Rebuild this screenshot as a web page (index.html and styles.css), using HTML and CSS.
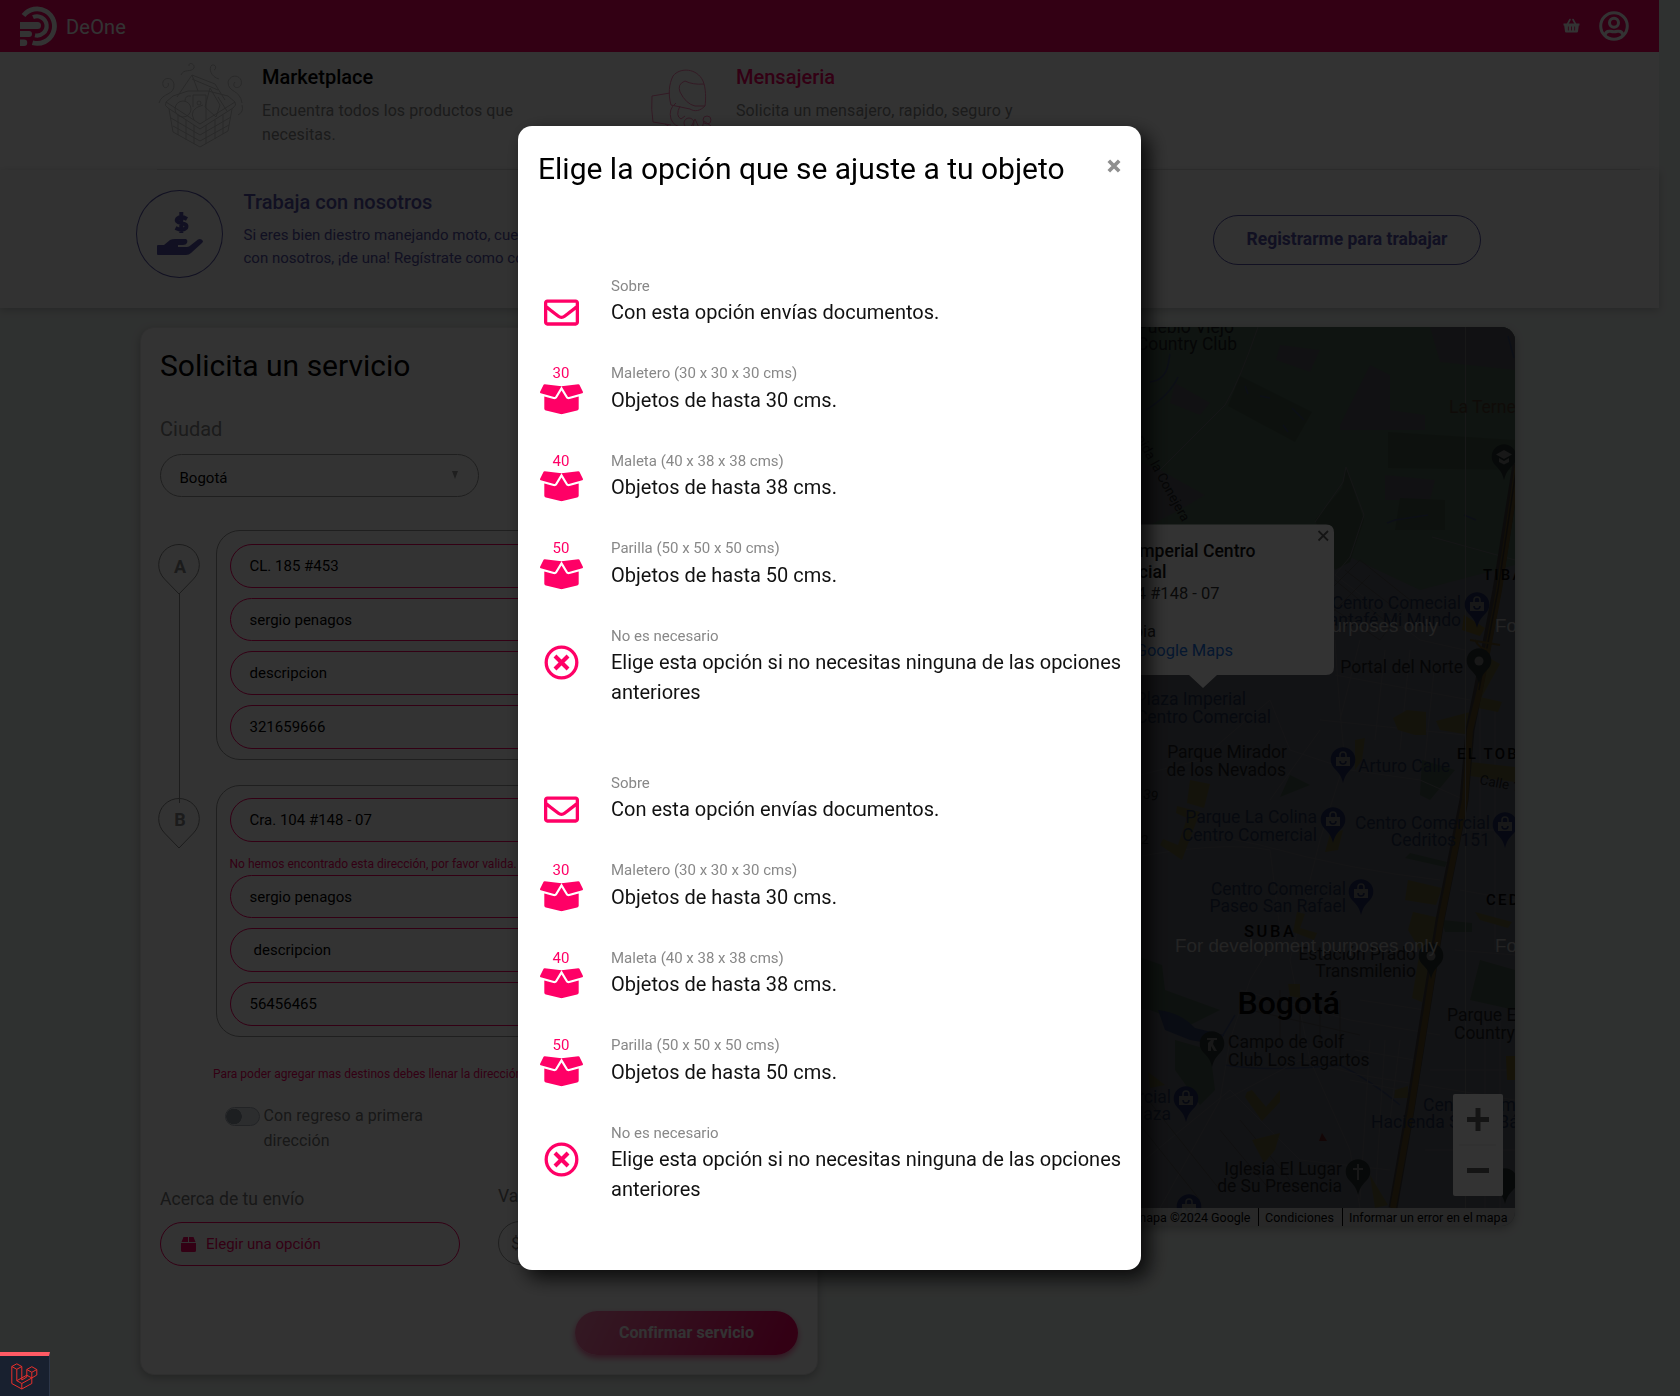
FILE: index.html
```html
<!DOCTYPE html>
<html lang="es">
<head>
<meta charset="utf-8">
<title>DeOne</title>
<link rel="stylesheet" href="styles.css">
</head>
<body>
<svg width="0" height="0" class="defs">
  <defs>
    <symbol id="envelope" viewBox="0 0 512 512"><path d="M464 64H48C21.5 64 0 85.500 0 112v288c0 26.500 21.500 48 48 48h416c26.500 0 48-21.500 48-48V112c0-26.500-21.500-48-48-48zm0 48v40.800c-22.400 18.300-58.200 46.700-134.600 106.500-16.800 13.200-50.200 45.100-73.400 44.700-23.200.4-56.600-31.500-73.400-44.700C106.200 199.500 70.400 171.100 48 152.800V112h416zM48 400V214.400c22.900 18.300 55.400 43.900 104.900 82.600 21.900 17.200 60.100 55.200 103.100 55 42.700.2 80.500-37.200 103.100-55 49.500-38.800 82-64.400 104.900-82.700V400H48z"/></symbol>
    <symbol id="box" viewBox="0 0 640 512"><path d="M425.700 256c-16.900 0-32.800-9-41.400-23.400L320 126l-64.200 106.600c-8.700 14.500-24.600 23.500-41.500 23.500-4.500 0-9-.6-13.300-1.900L64 215v178c0 14.700 10 27.500 24.200 31l216.200 54.100c10.200 2.500 20.900 2.500 31 0L551.800 424c14.200-3.600 24.200-16.400 24.200-31V215l-137 39.100c-4.300 1.300-8.800 1.900-13.300 1.900zm212.600-112.200L586.800 41c-3.100-6.200-9.800-9.800-16.700-8.900L320 64l91.700 152.100c3.800 6.300 11.400 9.300 18.500 7.300l197.900-56.500c9.900-2.900 14.700-13.900 10.200-23.100zM53.200 41L1.700 143.800c-4.600 9.200.3 20.200 10.100 23l197.900 56.500c7.100 2 14.700-1 18.500-7.300L320 64 69.800 32.100c-6.900-.8-13.500 2.700-16.600 8.900z"/></symbol>
    <symbol id="none" viewBox="0 0 512 512"><circle cx="256" cy="256" r="224" fill="none" stroke="currentColor" stroke-width="48"/><path d="M182 182L330 330M330 182L182 330" fill="none" stroke="currentColor" stroke-width="60" stroke-linecap="square"/></symbol>
    <g id="shop"><path class="shop-pin" d="M0 23C-2 15-5 12-9 8A12.300 12.300 0 1 1 9 8C5 12 2 15 0 23Z"/><path class="pin-mark" d="M-7-3H7V6H-7Z"/><path class="pin-line" d="M-3-3V-5A3 3 0 0 1 3-5V-3"/><path class="pin-smile" d="M-3 1A3 3 0 0 0 3 1"/></g>
    <g id="place"><path class="place-pin" d="M0 23C-2 15-5 12-9 8A12.300 12.300 0 1 1 9 8C5 12 2 15 0 23Z"/></g>
  </defs>
</svg>

<div class="page">
  <header class="topbar">
    <a class="brand">
      <svg width="38" height="40" viewBox="0 0 38 40" fill="none" stroke="#fff" stroke-width="4.800">
        <path d="M3.500 9.500A17.300 17.300 0 1 1 12.500 36.800"/><path stroke-width="4.200" d="M13 11.200A9.600 9.600 0 1 1 15 29.300"/>
        <path d="M0 16H17.500A3.500 3.500 0 0 1 17.500 23H0Z M0 25H9A3 3 0 0 1 9 31H0Z M0 33.500H4A3.200 3.200 0 0 1 4 40H0Z" fill="#fff" stroke="none"/>
      </svg>
      <span>DeOne</span>
    </a>
    <div class="actions">
      <svg width="17" height="15" viewBox="0 0 17 15"><path d="M4 7L7 1.500M13 7L10 1.500" fill="none" stroke="#fff" stroke-width="1.600" stroke-linecap="round"/><path fill="#fff" fill-rule="evenodd" d="M.5 5.500H16.500V7.500H15.800L15 13.500Q14.800 14.500 14 14.500H3Q2.200 14.500 2 13.500L1.200 7.500H.5ZM4.900 8.500V12.500H5.700V8.500ZM8.100 8.500V12.500H8.900V8.500ZM11.300 8.500V12.500H12.100V8.500Z"/></svg>
      <svg width="30" height="30" viewBox="0 0 30 30" fill="none" stroke="#fff" stroke-width="3"><circle cx="15" cy="15" r="13.300"/><circle cx="15" cy="11.800" r="4.500"/><path d="M6 24C7 19.500 10 20 11.500 20.300C14 21 16 21 18.500 20.300C20 20 23 19.500 24 24"/></svg>
    </div>
  </header>

  <nav class="services">
    <a class="service">
      <svg class="service-art" width="86" height="86" viewBox="0 0 86 86" fill="none" stroke="#cacaca" stroke-width="1">
        <path d="M8 40L42 62L77 40L70 34L50 29L30 29L15 34Z M8 40Q6 44 10 46L42 67L75 46Q79 43 77 40"/><path d="M11 47L15 70L42 85L70 69L74 47 M13 56L42 73L73 55 M15 64L42 79L71 63 M20 53V73 M28 58V78 M36 63V82 M48 63V82 M57 58V77 M65 53V72"/>
        <path d="M19 35L34 13L57 22L67 38 M34 13L40 29 M34 17L60 28 M35 33H48V58 M35 33V45 M41 39A2 2 0 1 0 41 43A2 2 0 1 0 41 39 M52 26L47 45L58 55L62 43Z M60 35L69 49 M36 58Q30 47 45 43"/><circle cx="25" cy="47" r="8"/><path d="M27 39Q27 33 33 34"/>
        <path d="M1 41C4 30 17 34 16 22C14 13 3 16 5 23C6 28 12 25 10 21 M84 41C82 27 70 31 70 20C73 10 86 14 83 23C80 28 73 25 77 20 M23 13C26 6 33 11 36 6C37 1 30 0 31 4 M61 17C53 15 50 6 54 3C58 2 59 7 56 8 M84 43Q86 50 80 53"/>
      </svg>
      <div><h2>Marketplace</h2><p>Encuentra todos los productos que necesitas.</p></div>
    </a>
    <a class="service service-active">
      <svg class="service-art" width="86" height="86" viewBox="0 0 86 86" fill="none" stroke="#ff0066" stroke-width="1" opacity=".5">
        <path d="M28 41C25 30 26 20 30 12C37 3 54 4 60 17C63 24 63 35 62 42C57 47 52 48 47 45Z"/><path d="M61 20Q50 21 42 17Q34 20 37 28Q43 40 52 42H62"/><path d="M27 29L9 32Q8 46 10 58L28 61 M33 39Q25 45 28 55Q31 63 40 63 M37 42Q32 52 38 55L42 52"/><circle cx="46" cy="59" r="5"/><circle cx="64" cy="56" r="4"/><path d="M22 60Q34 69 47 65L52 55L58 68L61 57L68 62V70H50"/>
      </svg>
      <div><h2>Mensajeria</h2><p>Solicita un mensajero, rapido, seguro y confiable.</p></div>
    </a>
  </nav>

  <section class="jobs">
    <div class="jobs-icon">
      <svg width="46" height="44" viewBox="0 0 46 44" fill="#5653a8"><path d="M1 33H7L13 28Q15 27 18 27H29Q31 28 30 31Q29 33 26 33H21V35H30Q32 35 34 33L41 27.500Q44 26 46 29Q46 30 45 31L34 41Q32 43 29 43H1Q0 43 0 42V34Q0 33 1 33Z"/><path d="M30 7Q24 3.500 20.500 6.500Q18 10 24 11Q31 12 29 16Q26 19.500 18.500 16M24.300 0V21" fill="none" stroke="#5653a8" stroke-width="4"/></svg>
    </div>
    <div class="jobs-text">
      <h2>Trabaja con nosotros</h2>
      <p>Si eres bien diestro manejando moto, cuentas con licencia y quieres trabajar<br>con nosotros, ¡de una! Regístrate como conductor.</p>
    </div>
    <a class="jobs-button">Registrarme para trabajar</a>
  </section>

  <main class="content">
    <form class="card">
      <h1>Solicita un servicio</h1>
      <label class="city-label">Ciudad</label>
      <div class="select"><span>Bogotá</span><svg width="6" height="8" viewBox="0 0 6 8"><path d="M0 0H6L3 8Z" fill="#999"/></svg></div>
      <div class="route">
        <svg class="stops" width="42" height="320" viewBox="0 0 42 320" fill="none" stroke="#8a8a8a" stroke-width="1">
          <path d="M21 64L6.500 49A20.300 20.300 0 1 1 35.500 49ZM21 318L6.500 303A20.300 20.300 0 1 1 35.500 303Z"/><path d="M21.500 64V273"/>
          <text x="22" y="42.500" text-anchor="middle">A</text><text x="22" y="296" text-anchor="middle">B</text>
        </svg>
        <div class="groups">
          <div class="group">
            <div class="field">CL. 185 #453</div><div class="field">sergio penagos</div><div class="field">descripcion</div><div class="field">321659666</div>
          </div>
          <div class="group group-b">
            <div class="field">Cra. 104 #148 - 07</div>
            <p class="error">No hemos encontrado esta dirección, por favor valida.</p>
            <div class="field">sergio penagos</div><div class="field field-indent">descripcion</div><div class="field">56456465</div>
          </div>
        </div>
      </div>
      <p class="note">Para poder agregar mas destinos debes llenar la dirección anterior</p>
      <div class="return"><span class="toggle"></span><span>Con regreso a primera dirección</span></div>
      <div class="shipment">
        <div class="about"><label>Acerca de tu envío</label>
          <div class="pick"><svg width="15" height="15" viewBox="0 0 15 15" fill="#f06"><path d="M2.500 0H7V5H0.500ZM8 0H12.500L14.500 5H8ZM0 6H15V13.500Q15 15 13.500 15H1.500Q0 15 0 13.500Z"/></svg>Elegir una opción</div></div>
        <div class="value"><label>Valor declarado</label><div class="money">$</div></div>
      </div>
      <div class="submit"><button type="button">Confirmar servicio</button></div>
    </form>

    <div class="map">
      <svg width="677" height="899" viewBox="838 327 677 899">
        <rect x="838" y="327" width="677" height="899" fill="#5d5f69"/>
        <path fill="#4c6454" d="M1100 327H1515V565L1420 590L1350 557L1320 580L1100 540Z"/>
        <path fill="#56585f" d="M1280 345L1320 350L1310 372L1276 360ZM1175 383L1210 403L1200 415L1170 403ZM1340 425L1370 365L1390 375V410L1425 415V430H1340ZM1430 327H1515V370L1440 362ZM1385 475L1435 480L1430 500H1385ZM1120 455L1160 470L1205 495L1180 510L1120 540Z"/>
        <path fill="#425847" d="M1240 376L1312 412L1295 442L1228 406ZM1388 432L1515 440V470L1388 468ZM1400 498L1445 500V530H1395ZM1346 467L1364 520L1350 562L1335 570L1315 520L1342 488Z"/>
        <path fill="#42584a" d="M1120 950L1162 965L1165 990L1220 1010L1190 1025L1150 1010L1120 1008ZM1175 1040L1210 1050L1215 1090L1200 1105L1175 1070ZM1480 960L1515 970V1010L1470 1000ZM1422 760L1455 770L1430 800L1420 795ZM1290 775L1310 785L1280 797ZM1410 853L1447 862L1445 867L1405 858ZM1442 920L1472 923V932H1445Z"/>
        <path fill="#2f3c62" d="M1158 1010Q1180 1012 1195 1028L1224 1035L1218 1045L1190 1040L1165 1030Z"/>
        <g fill="none" stroke="#3d4a70" stroke-width="1.500"><path d="M1146 410Q1170 395 1178 377M1150 382Q1165 380 1168 365L1170 354M1387 523L1395 520L1428 515M1464 515L1476 520M1245 386L1248 394M1260 396L1270 398M1292 408L1304 420M1283 425L1288 432M1508 336L1514 358M1225 1065Q1270 1072 1340 1065Q1370 1080 1400 1105M1235 1015L1220 1040"/></g>
        <g fill="none" stroke="#6b6c72" stroke-width="1"><path d="M1258 327Q1240 380 1225 405L1160 470M1315 522L1343 482L1346 467L1364 515L1350 557L1335 575L1420 640L1465 650M1432 537L1515 560M1335 640Q1340 720 1345 760L1320 840L1300 920L1290 960L1310 1060L1350 1150L1360 1208M1120 780L1200 760L1270 700L1290 750L1350 770L1420 780L1465 800M1120 860Q1220 840 1270 850L1280 930L1250 980L1230 1040L1220 1100L1160 1208M1190 830L1260 845Q1350 870 1440 880M1240 990L1350 1020L1440 1035M1225 1100L1300 1060L1360 1075L1515 1100M1120 1180L1230 1090L1300 1160L1390 1170M1335 675L1470 700M1320 720L1465 735M1360 640L1340 720M1385 650L1375 740M1410 650L1400 750M1435 660L1425 760M1370 1040L1360 1200M1385 1040L1375 1200M1400 1040L1390 1120M1360 1000L1425 1010M1355 1050L1415 1060M1350 1080L1410 1092M1270 800L1320 730M1470 830H1515M1460 890L1515 900M1455 950L1515 955M1430 1070H1515M1425 1150H1515M1480 700V840M1495 710V950M1485 1020V1208M1500 1020V1208"/></g>
        <path stroke="#505051" stroke-width="1" fill="none" d="M1120 1100L1200 1200M1140 1090L1220 1190M1220 1130L1270 1190M1240 1120L1290 1180M1280 990V1040M1300 995V1045M1320 1000V1050M1340 1000V1055M1250 1010L1360 1035M1320 600L1360 560L1410 600L1380 640ZM1335 580L1390 625M1345 570L1400 612M1330 615L1370 575"/>
        <g fill="#65623a"><path d="M1190 780L1210 784L1204 808L1187 803ZM1177 806L1200 812L1182 860L1160 845L1163 839L1178 845L1187 818L1176 813ZM1393 718L1407 710L1426 712V735L1415 735L1398 730ZM1436 721L1470 712V735L1440 730ZM1475 650L1500 664L1480 700ZM1480 697L1502 702L1498 712L1478 708ZM1470 762L1515 767V782L1470 776ZM1330 834L1343 830L1338 850L1325 852ZM1408 880L1442 888L1436 905L1405 900ZM1413 912L1440 918L1422 1002L1412 998L1420 950L1408 930ZM1475 912L1512 922L1508 928L1480 920ZM1297 912L1305 914L1300 928L1317 933L1314 940L1293 932ZM1247 1092L1252 1090L1266 1107L1280 1090V1102L1262 1121L1245 1097ZM1252 1140L1280 1133L1275 1150L1264 1163ZM1395 1090L1408 1086V1098H1394ZM1288 984H1300V998L1290 996ZM1148 1072L1156 1078L1165 1085L1150 1088ZM1370 1175L1388 1205L1375 1208ZM1355 740L1365 738L1362 760L1355 770Z"/></g>
        <g fill="none" stroke="#3c3a38" stroke-width="9"><path d="M1517 464L1497 590L1478 690L1470 730L1464 800L1440 920L1410 1110L1393 1208"/></g>
        <g fill="none" stroke="#5e4c24" stroke-width="6"><path d="M1518 464L1499 590L1480 690L1470 730L1465 800L1441 920L1411 1110L1393 1208"/></g>
        <path fill="none" stroke="#34302a" stroke-width="1.500" d="M1517 464L1498 590L1479 690"/>
        <path fill="none" stroke="#5e4c24" stroke-width="2" d="M1470 640L1500 645M1475 640Q1480 650 1490 650"/>
        <path fill="#6f6128" d="M1464 615L1485 628L1480 636L1462 630ZM1506 1056H1515V1080H1507Z"/>
        <path stroke="#777" d="M1465.500 327V1208"/>
        <g class="labels" text-anchor="end">
          <text x="1234" y="333">Pueblo Viejo</text><text x="1237" y="350">Country Club</text>
          <text x="1463" y="673">Portal del Norte</text><text x="1287" y="758">Parque Mirador</text><text x="1286" y="775.500">de los Nevados</text>
          <text x="1416" y="959.500">Estación Prado</text><text x="1416" y="976.500">Transmilenio</text><text x="1342" y="1174.500">Iglesia El Lugar</text><text x="1342" y="1192">de Su Presencia</text>
          <g class="shops"><text x="1461" y="608.500">Centro Comecial</text><text x="1461" y="626">Santafé Mi Mundo</text><text x="1246" y="705">Plaza Imperial</text><text x="1271" y="722.500">Centro Comercial</text><text x="1317" y="823">Parque La Colina</text><text x="1317" y="841">Centro Comercial</text><text x="1490" y="829">Centro Comercial</text><text x="1490" y="846">Cedritos 151</text><text x="1346" y="895">Centro Comercial</text><text x="1346" y="911.500">Paseo San Rafael</text><text x="1171" y="1102.500">Centro Comercial</text><text x="1171" y="1120">Plaza</text><text x="1450" y="772">Arturo Calle</text></g>
        </g>
        <g class="labels">
          <text x="1449" y="412.500" fill="#4a3b2c">La Ternera</text><text x="1228" y="1048">Campo de Golf</text><text x="1228" y="1066">Club Los Lagartos</text><text x="1447" y="1021">Parque El</text><text x="1454" y="1039">Country</text>
          <g class="shops"><text x="1423" y="1111">Centro Comercial</text><text x="1371" y="1128">Hacienda Santa Bárbara</text></g>
          <text class="street" transform="translate(1125 419) rotate(61)">Avenida la Conejera</text><text class="street" transform="translate(1479 784) rotate(11)">Calle 170</text><text class="street" transform="translate(1135 797) rotate(10)">139</text><text class="street" x="1141" y="844">2</text>
        </g>
        <g class="district"><text x="1483" y="580">TIBABITA</text><text x="1457" y="758.500">EL TOBERIN</text><text x="1244" y="937" class="suba">SUBA</text><text x="1486" y="905">CEDRITOS</text></g>
        <text class="city" x="1237.500" y="1014">Bogotá</text>
        <use href="#shop" x="1477" y="605"/><use href="#shop" x="1343" y="760"/><use href="#shop" x="1333" y="820"/><use href="#shop" x="1505" y="825"/><use href="#shop" x="1361" y="892"/><use href="#shop" x="1186" y="1099"/><use href="#shop" x="1189" y="1207"/>
        <use href="#place" x="1504" y="457"/><use href="#place" x="1479" y="661"/><use href="#place" x="1431" y="956"/><use href="#place" x="1212" y="1044"/><use href="#place" x="1358" y="1172"/><use href="#place" x="1505" y="1181"/>
        <g class="pin-mark"><circle cx="1479" cy="661" r="4.500"/><circle cx="1431" cy="956" r="4.500"/><path d="M1504 450L1512 454.500L1504 459L1496 454.500ZM1499 458L1504 461L1509 458V462L1504 464.500L1499 462ZM1357 1164H1359V1168H1363V1170H1359V1180H1357V1170H1353V1168H1357ZM1207 1038H1217V1040H1214L1213 1044L1217 1051H1214L1211 1046V1051H1208V1043L1211 1040H1207Z"/></g>
        <g class="watermark"><text x="1175" y="632">For development purposes only</text><text x="1495" y="632">For development</text><text x="1175" y="952">For development purposes only</text><text x="1495" y="952">For development</text></g>
        <path fill="#602020" d="M1322 1133L1327 1141H1319Z"/>
        <g class="info"><path d="M900 524.500H1326Q1334 524.500 1334 532.500V667Q1334 675 1326 675H1217L1203 688L1189 675H900Z" fill="#fff"/>
          <path d="M1318.500 531L1328 540.500M1328 531L1318.500 540.500" stroke="#666" stroke-width="1.800"/>
          <g text-anchor="end"><text class="info-title" x="1255.500" y="557">Plaza Imperial Centro</text><text class="info-title" x="1166.500" y="578">Comercial</text><text x="1219.500" y="599">Cra. 104 #148 - 07</text><text x="1156" y="637">Colombia</text><text x="1233" y="656" class="info-link">Ver en Google Maps</text></g></g>
        <g><rect x="1453" y="1094" width="50" height="102" rx="2" fill="#fff"/><path d="M1467 1119.500H1489M1478 1108V1131M1467 1170.500H1489" stroke="#666" stroke-width="5"/><path d="M1459 1145H1496" stroke="#e6e6e6"/></g>
        <rect x="838" y="1208" width="677" height="18" fill="#d8dad9" opacity=".85"/>
        <g class="legal"><text x="1250.500" y="1222" text-anchor="end">Datos del mapa ©2024 Google</text><text x="1265" y="1222">Condiciones</text><text x="1349" y="1222">Informar un error en el mapa</text><path d="M1258.500 1208V1226M1342.500 1208V1226" stroke="#000"/></g>
      </svg>
    </div>
  </main>
</div>

<div class="backdrop"></div>

<div class="modal" role="dialog">
  <div class="modal-head"><h2>Elige la opción que se ajuste a tu objeto</h2>
    <svg width="14" height="14" viewBox="0 0 14 14"><path d="M1.800 1.800L12.200 12.200M12.200 1.800L1.800 12.200" stroke="#8f8f8f" stroke-width="3.700"/></svg></div>
  <ul class="options">
    <li><div class="option-icon"><b></b><svg width="35" height="35"><use href="#envelope"/></svg></div><div><small>Sobre</small><p>Con esta opción envías documentos.</p></div></li>
    <li><div class="option-icon numbered"><b>30</b><svg width="43" height="34.400"><use href="#box"/></svg></div><div><small>Maletero (30 x 30 x 30 cms)</small><p>Objetos de hasta 30 cms.</p></div></li>
    <li><div class="option-icon numbered"><b>40</b><svg width="43" height="34.400"><use href="#box"/></svg></div><div><small>Maleta (40 x 38 x 38 cms)</small><p>Objetos de hasta 38 cms.</p></div></li>
    <li><div class="option-icon numbered"><b>50</b><svg width="43" height="34.400"><use href="#box"/></svg></div><div><small>Parilla (50 x 50 x 50 cms)</small><p>Objetos de hasta 50 cms.</p></div></li>
    <li><div class="option-icon"><b></b><svg width="35" height="35"><use href="#none"/></svg></div><div><small>No es necesario</small><p>Elige esta opción si no necesitas ninguna de las opciones anteriores</p></div></li>
  </ul>
  <ul class="options">
    <li><div class="option-icon"><b></b><svg width="35" height="35"><use href="#envelope"/></svg></div><div><small>Sobre</small><p>Con esta opción envías documentos.</p></div></li>
    <li><div class="option-icon numbered"><b>30</b><svg width="43" height="34.400"><use href="#box"/></svg></div><div><small>Maletero (30 x 30 x 30 cms)</small><p>Objetos de hasta 30 cms.</p></div></li>
    <li><div class="option-icon numbered"><b>40</b><svg width="43" height="34.400"><use href="#box"/></svg></div><div><small>Maleta (40 x 38 x 38 cms)</small><p>Objetos de hasta 38 cms.</p></div></li>
    <li><div class="option-icon numbered"><b>50</b><svg width="43" height="34.400"><use href="#box"/></svg></div><div><small>Parilla (50 x 50 x 50 cms)</small><p>Objetos de hasta 50 cms.</p></div></li>
    <li><div class="option-icon"><b></b><svg width="35" height="35"><use href="#none"/></svg></div><div><small>No es necesario</small><p>Elige esta opción si no necesitas ninguna de las opciones anteriores</p></div></li>
  </ul>
</div>

<div class="debugbar">
  <svg width="27" height="27" viewBox="0 0 27 27" fill="none" stroke="#e8302c" stroke-width="1" stroke-linejoin="round"><path d="M.8 3.500L5.800.8L10.800 3.500V17L15.800 14V6.500L20.800 3.700L25.800 6.500V12L20.800 15V20.500L10.800 26L.8 20.500ZM.8 3.500L5.800 6.300L10.800 3.500M5.800 6.300V17.700L10.800 20.500L20.800 15L15.800 12.200L5.800 17.700M10.800 20.500V26M15.800 6.500L20.800 9.300L25.800 6.500M20.800 9.300V15"/></svg>
</div>
</body>
</html>
```

FILE: styles.css
```css
* { box-sizing: border-box; }
body {
  margin: 0;
  height: 1396px;
  overflow: hidden;
  background: #ecf2ef;
  font-family: Roboto, "Liberation Sans", sans-serif;
  color: #000;
}
h1, h2, p, ul { margin: 0; padding: 0; font-weight: 400; }
.defs { position: absolute; }
.page { width: 1659px; }

.topbar {
  height: 52px;
  padding: 0 30px 0 20px;
  display: flex;
  align-items: center;
  justify-content: space-between;
  background: #ff0066;
  color: #fff;
}
.brand { display: flex; align-items: center; gap: 8px; font-size: 20px; letter-spacing: .2px; }
.brand span { padding-top: 1px; }
.actions { display: flex; align-items: center; gap: 19px; }
.actions svg:first-child { margin-top: -2px; }

.services {
  height: 118px;
  padding-left: 157px;
  display: grid;
  grid-template-columns: 474px 474px;
  background: linear-gradient(#e4e4e4, #e4e4e4) 157px 100% / 1483px 1px no-repeat #fff;
}
.service { display: grid; grid-template-columns: 105px 266px; padding-top: 13px; }
.service-art { margin: -3px 0 0 1px; }
.service-active .service-art { margin: -1px 0 0 12px; }
.service h2 { font-size: 20px; line-height: 24px; font-weight: 500; }
.service p { margin-top: 10px; font-size: 16px; line-height: 24px; letter-spacing: .1px; color: #888; }
.service-active { grid-template-columns: 105px 290px; }
.service-active h2 { color: #ff0066; }

.jobs {
  height: 138px;
  padding: 20px 0 0 136px;
  display: flex;
  align-items: flex-start;
  background: #f7f7f7;
  box-shadow: 0 2px 8px rgba(0, 0, 0, .2);
  color: #5653a8;
}
.jobs-icon {
  width: 87px;
  height: 88px;
  margin-right: 20.5px;
  display: flex;
  align-items: center;
  justify-content: center;
  border: 1px solid #5653a8;
  border-radius: 50%;
}
.jobs-text { width: 969.5px; }
.jobs-text h2 { font-size: 20px; line-height: 24px; font-weight: 500; }
.jobs-text p { margin-top: 10px; font-size: 15px; line-height: 23px; }
.jobs-button {
  width: 268px;
  height: 50px;
  margin-top: 25px;
  border: 1px solid #5653a8;
  border-radius: 25px;
  text-align: center;
  font-size: 17.5px;
  font-weight: 700;
  line-height: 47px;
}

.content { display: flex; align-items: flex-start; gap: 20px; padding: 19px 0 0 140px; }
.card {
  width: 678px;
  height: 1048px;
  padding: 20px 19px 0;
  border: 1px solid #e8e8e8;
  border-radius: 14px;
  background: #fff;
  box-shadow: 0 3px 8px rgba(0, 0, 0, .25);
}
.card h1 { font-size: 30px; line-height: 36px; }
.city-label { display: block; margin-top: 33px; font-size: 20px; line-height: 24px; color: #888; }
.select {
  width: 319px;
  height: 43px;
  margin-top: 13px;
  padding: 5px 20px 0 18.5px;
  display: flex;
  align-items: center;
  justify-content: space-between;
  border: 1px solid #999;
  border-radius: 22px;
  font-size: 15px;
}
.select svg { margin-top: -6px; }
.route { display: grid; grid-template-columns: 56px 582px; margin-top: 33px; }
.stops { margin-left: -2px; }
.stops text { font-size: 18px; font-weight: 700; fill: #888; stroke: none; }
.group { padding: 13px; height: 230px; border: 1px solid #999; border-radius: 24px; display: grid; grid-auto-rows: 43.7px; row-gap: 10px; }
.group-b { height: 252px; margin-top: 25px; padding-top: 12px; display: block; }
.field {
  height: 43.7px;
  padding-left: 18.5px;
  border: 1px solid #ff0066;
  border-radius: 22px;
  font-size: 15px;
  line-height: 42px;
}
.group-b .field + .field { margin-top: 10px; }
.field-indent { padding-left: 22.5px; }
.error, .note { font-size: 12px; line-height: 18px; color: #ff0066; }
.error { margin: 13px 0 2px -.5px; }
.note { margin: 28px 0 0 53px; }
.return { margin: 20px 0 0 65px; display: flex; gap: 3.5px; width: 215px; font-size: 16px; line-height: 25px; letter-spacing: .1px; color: #777; }
.toggle {
  flex: none;
  width: 35px;
  height: 19px;
  margin-top: 4px;
  border: 1px solid #a9b0bb;
  border-radius: 10px;
  background: radial-gradient(circle at 8px 50%, #9299a5 7.500px, #dadee4 8px);
}
.shipment { display: flex; gap: 38px; margin-top: 35px; }
.shipment label { display: block; font-size: 17.6px; line-height: 22px; color: #777; }
.about { width: 300px; }
.pick {
  height: 44px;
  margin-top: 12px;
  padding-left: 20px;
  display: flex;
  align-items: center;
  gap: 10px;
  border: 1px solid #ff0066;
  border-radius: 22px;
  font-size: 15px;
  color: #ff0066;
}
.value { flex: 1; margin-top: -3px; }
.money { height: 44px; margin-top: 14px; padding-left: 12px; border: 1px solid #999; border-radius: 22px; font-size: 17px; line-height: 42px; color: #777; }
.submit { display: flex; justify-content: flex-end; margin-top: 45px; }
.submit button {
  width: 223px;
  height: 44px;
  padding: 0 0 2px;
  border: 0;
  border-radius: 22px;
  background: linear-gradient(115deg, #ff80b0, #ff0066 92%);
  box-shadow: 0 3px 6px rgba(255, 0, 102, .6);
  font: 700 16px Roboto, sans-serif;
  letter-spacing: .1px;
  color: #fff;
}

.map { height: 899px; border-radius: 14px; overflow: hidden; box-shadow: 0 3px 8px rgba(0, 0, 0, .25); }
.map svg { display: block; }
.labels { font-size: 17.5px; fill: #1b1d20; }
.shops { fill: #22304c; }
.labels .street { font-size: 13.5px; }
.district { font-size: 15px; font-weight: 500; letter-spacing: 2.2px; fill: #050505; }
.district .suba { font-size: 16.5px; letter-spacing: 2.6px; }
.city { font-size: 32px; font-weight: 500; fill: #000; }
.watermark { font: 18.8px "Liberation Sans", sans-serif; fill: #b4b4b4; }
.shop-pin { fill: #1f2c5c; }
.place-pin { fill: #25302f; }
.pin-mark { fill: #777; }
.pin-line { fill: none; stroke: #777; stroke-width: 1.500; }
.pin-smile { fill: none; stroke: #1f2c5c; stroke-width: 1.500; }
.info { font-size: 16.5px; fill: #333; }
.info-title { font-size: 17.6px; font-weight: 500; fill: #111; }
.info-link { fill: #1a73e8; }
.legal { font-size: 12.5px; fill: #000; }

.backdrop { position: fixed; inset: 0; background: rgba(0, 0, 0, .8); }
.modal {
  position: fixed;
  left: 518px;
  top: 126px;
  width: 623px;
  height: 1144px;
  padding: 25px 20px 0;
  border-radius: 14px;
  background: #fff;
  box-shadow: 8px 8px 20px rgba(0, 0, 0, .8);
}
.modal-head { display: flex; justify-content: space-between; }
.modal-head h2 { font-size: 30px; line-height: 36px; }
.modal-head svg { margin-top: 7.5px; }
.options { list-style: none; margin-top: 87.5px; }
.options + .options { margin-top: 64.5px; }
.options li { display: grid; grid-template-columns: 46px 1fr; column-gap: 27px; margin-bottom: 35px; }
.options li > div:last-child { margin-right: -5px; }
.options small { display: block; font-size: 15px; line-height: 22.5px; color: #888; }
.options p { font-size: 20px; line-height: 30px; color: #111; }
.option-icon { display: flex; flex-direction: column; align-items: center; height: 56px; margin-bottom: -3.5px; color: #ff0066; fill: #ff0066; }
.option-icon b { flex: none; height: 19.5px; font-size: 15px; font-weight: 400; line-height: 22px; }
.option-icon svg { flex: none; margin-top: 1px; }
.option-icon.numbered svg { margin-top: 0; }

.debugbar {
  position: fixed;
  left: 0;
  bottom: 0;
  width: 50px;
  height: 44px;
  padding: 7px 0 0 10.5px;
  border-top: 4px solid #ff5a65;
  border-right: 1px solid #2d3648;
  background: #18202f;
}
```
